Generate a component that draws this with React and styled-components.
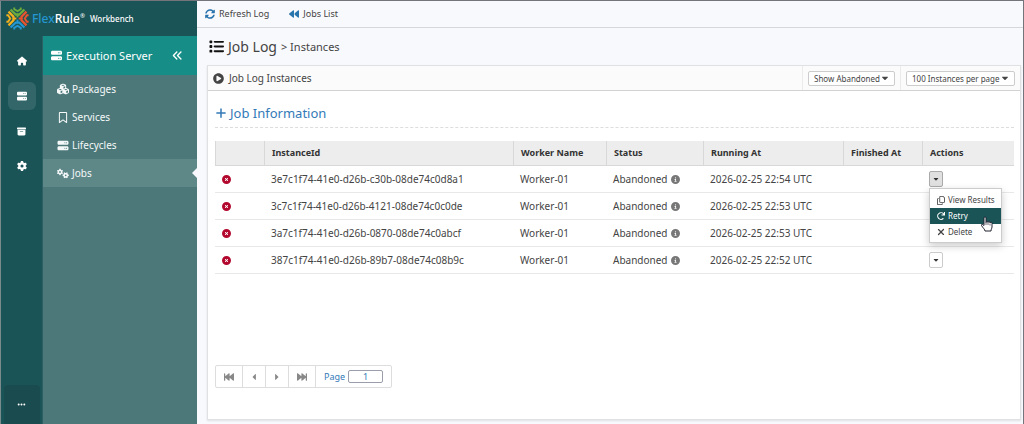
import React from 'react';
import styled, { createGlobalStyle } from 'styled-components';
import { FaCaretDown, FaCaretLeft, FaCaretRight, FaPlayCircle, FaRedo, FaSyncAlt } from 'react-icons/fa';
import {
  FaAnglesLeft,
  FaBackward,
  FaBackwardFast,
  FaBoxArchive,
  FaCircleInfo,
  FaCircleXmark,
  FaCubes,
  FaEllipsis,
  FaForwardFast,
  FaGear,
  FaGears,
  FaHouse,
  FaList,
  FaPlus,
  FaRegBookmark,
  FaRegCopy,
  FaServer,
  FaXmark,
} from 'react-icons/fa6';

const GlobalStyle = createGlobalStyle`
  *, *::before, *::after {
    box-sizing: border-box;
  }

  body {
    margin: 0;
    background: #f8f9fc;
    color: #444;
    font-family: 'Noto Sans', 'Open Sans', sans-serif;
    font-size: 10px;
    line-height: 16px;
  }

  button, input, select {
    font: inherit;
    color: inherit;
  }

  a {
    color: inherit;
    text-decoration: none;
  }

  svg {
    flex-shrink: 0;
  }
`;

const Shell = styled.div`
  display: grid;
  grid-template-columns: 197px minmax(0, 1fr);
  min-height: 100vh;
  border: 1px solid #74757c;
  border-width: 1px 1px 0 0;
`;

const Navigation = styled.div`
  display: grid;
  grid-template-columns: 42px 1fr;
  grid-template-rows: 35px 1fr;
  background: #1a5457;
  border-left: 1px solid #7b8a8c;
  color: #fff;
`;

const Brand = styled.a`
  grid-column: 1 / -1;
  display: flex;
  align-items: center;
  padding-left: 5px;

  & > svg {
    margin-right: 3px;
  }

  & strong {
    font-size: 12px;
    font-weight: 500;
  }

  & em {
    color: #2596d1;
    font-style: normal;
  }

  & sup {
    font-size: 6px;
    line-height: 6px;
  }

  & > span {
    margin-left: 5px;
    font-size: 8px;
    font-weight: 500;
  }
`;

const Rail = styled.nav`
  display: flex;
  flex-direction: column;
  align-items: center;
  gap: 7px;
  padding-top: 11px;
  border-right: 1px solid #2c6064;
`;

const RailLink = styled.a`
  display: grid;
  place-items: center;
  width: 28px;
  height: 28px;
  border-radius: 6px;
  background: ${({ $active }) => ($active ? '#326669' : 'transparent')};
`;

const RailMore = styled.button`
  width: 36px;
  height: 39px;
  margin-top: auto;
  padding: 0;
  border: 0;
  border-radius: 4px 4px 0 0;
  background: #1a4b4e;
  color: #fff;
`;

const Sidebar = styled.nav`
  background: #4c787a;
`;

const SidebarHeader = styled.div`
  display: flex;
  align-items: center;
  gap: 4px;
  height: 39px;
  padding: 0 14px 0 8px;
  background: #168d87;
  font-size: 11px;

  & button {
    display: flex;
    margin-left: auto;
    padding: 0;
    border: 0;
    background: none;
    color: #fff;
  }
`;

const SidebarLink = styled.a`
  position: relative;
  display: flex;
  align-items: center;
  gap: 3px;
  height: 28px;
  padding-left: 14px;
  background: ${({ $active }) => ($active ? '#5e8788' : 'transparent')};
  color: #f4f8f8;

  & svg {
    width: 12px;
  }

  &::after {
    content: '';
    display: ${({ $active }) => ($active ? 'block' : 'none')};
    position: absolute;
    right: 0;
    border: 5px solid transparent;
    border-left-width: 0;
    border-right-color: #f8f9fc;
  }
`;

const Main = styled.main`
  display: flex;
  flex-direction: column;
  padding-bottom: 4px;
`;

const Toolbar = styled.div`
  display: flex;
  align-items: center;
  gap: 20px;
  height: 27px;
  padding-left: 8px;
  border-bottom: 1px solid #d5d7da;
`;

const ToolButton = styled.button`
  display: flex;
  align-items: center;
  gap: 4px;
  padding: 0;
  border: 0;
  background: none;
  font-size: 9px;

  & svg {
    color: #2a74ad;
  }
`;

const Title = styled.h1`
  display: flex;
  align-items: center;
  gap: 4px;
  height: 37px;
  margin: 0;
  padding-left: 12px;
  font-size: 14px;
  font-weight: 400;

  & svg {
    color: #111;
  }

  & small {
    font-size: 11px;
  }
`;

const Panel = styled.section`
  flex: 1;
  margin: 0 2px 0 10px;
  border: 1px solid #e0e1e3;
  background: #fff;
  box-shadow: 0 1px 2px rgba(0, 0, 0, 0.1);
`;

const PanelHeader = styled.header`
  display: flex;
  align-items: center;
  height: 25px;
  padding-left: 5px;
  border-bottom: 1px solid #d0d2d4;
  background: #fbfbfb;

  & h2 {
    display: flex;
    align-items: center;
    gap: 5px;
    margin: 0 auto 0 0;
    font-size: 10px;
    font-weight: 400;
  }
`;

const Filter = styled.div`
  display: flex;
  align-items: center;
  align-self: stretch;
  padding: 0 5px;
  border-left: 1px solid #ebebeb;
`;

const SelectBox = styled.div`
  display: grid;
  align-items: center;

  & > * {
    grid-area: 1 / 1;
  }

  & select {
    appearance: none;
    height: 15px;
    padding: 0 14px 0 5px;
    border: 1px solid #ccc;
    border-radius: 2px;
    background: #fff;
    font-size: 8px;
    line-height: 13px;
  }

  & svg {
    justify-self: end;
    margin-right: 5px;
    pointer-events: none;
  }
`;

const PanelBody = styled.div`
  padding: 8px 6px 8px 7px;
`;

const InfoToggle = styled.button`
  display: flex;
  align-items: center;
  gap: 3px;
  width: 100%;
  height: 29px;
  margin-bottom: 13px;
  padding: 0;
  border: 0;
  border-bottom: 1px dashed #ddd;
  background: none;
  color: #337ab7;
  font-size: 13px;
`;

const Table = styled.table`
  width: 100%;
  border-collapse: separate;
  border-spacing: 0;
  table-layout: fixed;

  & th, & td {
    padding: 0 7px;
    text-align: left;
    white-space: nowrap;
  }

  & th {
    height: 25px;
    border-bottom: 1px solid #d8d8d8;
    border-left: 1px solid #d8d8d8;
    background: #ededed;
    color: #333;
    font-size: 9px;
    font-weight: 700;
  }

  & td {
    height: 27px;
    border-bottom: 1px solid #e8e8e8;
  }
`;

const Status = styled.span`
  display: flex;
  align-items: center;
  gap: 3px;

  & svg {
    color: ${({ $failed }) => ($failed ? '#b3092f' : '#777')};
  }
`;

const ActionCell = styled.div`
  position: relative;
  display: flex;
`;

const ActionButton = styled.button`
  display: grid;
  place-items: center;
  width: 14px;
  height: 16px;
  padding: 0;
  border: 1px solid ${({ $open }) => ($open ? '#aaa' : '#ccc')};
  border-radius: 2px;
  background: ${({ $open }) => ($open ? '#e0e0e0' : '#fff')};
  color: #333;
`;

const Menu = styled.div`
  position: absolute;
  z-index: 1;
  top: calc(100% + 1px);
  left: 0;
  width: 73px;
  padding: 3px 0 2px;
  border: 1px solid #ccc;
  background: #fff;
  box-shadow: 0 3px 8px rgba(0, 0, 0, 0.2);
`;

const MenuItem = styled.button`
  display: flex;
  align-items: center;
  gap: 2px;
  width: 100%;
  height: 16px;
  padding: 0 6px;
  border: 0;
  background: ${({ $active }) => ($active ? '#1a5457' : 'none')};
  color: ${({ $active }) => ($active ? '#fff' : '#444')};
  font-size: 8px;
  white-space: nowrap;

  & svg {
    width: 10px;
  }
`;

const Pointer = styled.svg`
  position: absolute;
  top: 27px;
  left: 50px;
`;

const Pager = styled.div`
  display: inline-flex;
  height: 23px;
  margin-top: 91px;
  border: 1px solid #ddd;
  border-radius: 2px;
`;

const PagerButton = styled.button`
  display: grid;
  place-items: center;
  width: ${({ $wide }) => ($wide ? '27px' : '23px')};
  padding: 0;
  border: 0;
  border-right: 1px solid #ddd;
  background: none;
  color: #888;
`;

const PageField = styled.label`
  display: flex;
  align-items: center;
  gap: 3px;
  padding: 0 8px;
  color: #337ab7;
  font-size: 9px;

  & input {
    width: 35px;
    height: 13px;
    padding: 0;
    border: 1px solid #9a9daa;
    border-radius: 2px;
    background: #fff;
    text-align: center;
  }
`;

const columns = [
  { label: '', width: '49px' },
  { label: 'InstanceId' },
  { label: 'Worker Name', width: '93px' },
  { label: 'Status', width: '97px' },
  { label: 'Running At', width: '140px' },
  { label: 'Finished At', width: '79px' },
  { label: 'Actions', width: '92px' },
];

const instances = [
  { id: '3e7c1f74-41e0-d26b-c30b-08de74c0d8a1', runningAt: '2026-02-25 22:54 UTC' },
  { id: '3c7c1f74-41e0-d26b-4121-08de74c0c0de', runningAt: '2026-02-25 22:53 UTC' },
  { id: '3a7c1f74-41e0-d26b-0870-08de74c0abcf', runningAt: '2026-02-25 22:53 UTC' },
  { id: '387c1f74-41e0-d26b-89b7-08de74c08b9c', runningAt: '2026-02-25 22:52 UTC' },
];

// top, right, bottom, left
const logoArms = ['#6dab3c', '#e8542f', '#2596d1', '#f2b01e'];

const Logo = () => (
  <svg width="23" height="23" viewBox="-12 -12 24 24" fill="none" aria-hidden="true">
    {logoArms.map((color, i) => (
      <g key={color} transform={`rotate(${i * 90})`} stroke={color}>
        <path d="M-7.2 -9.4L-1.8 -4.200H1.8L7.2 -9.400" strokeWidth="2.4" />
        <path d="M0 -1.200V-5" strokeWidth="2" />
        <path d="M-3.4 -11.6V-9.800L0 -7.600L3.4 -9.800V-11.600" strokeWidth="2" />
      </g>
    ))}
  </svg>
);

const HandPointer = () => (
  <Pointer width="13" height="16" viewBox="0 0 13 16" aria-hidden="true">
    <path
      d="M4 9.500V2a1 1 0 0 1 2 0v4.500a1 1 0 0 1 2 0a1 1 0 0 1 2 .5a1 1 0 0 1 2 .8V11c0 1.500-1 2-1 4H5c0-1.500-2-3-3.500-5.500C1 8.500 2.200 8 3 8.800z"
      fill="#fff"
      stroke="#223"
      strokeLinejoin="round"
    />
    <path d="M6 6.500v2.500M8 7v2M10 7.500v2" stroke="#223" strokeWidth="0.7" fill="none" />
  </Pointer>
);

const App = () => {
  return (
    <>
      <GlobalStyle />
      <Shell>
        <Navigation>
          <Brand href="#">
            <Logo />
            <strong>
              <em>Flex</em>Rule<sup>®</sup>
            </strong>
            <span>Workbench</span>
          </Brand>
          <Rail>
            <RailLink href="#home" aria-label="Home">
              <FaHouse size={10} />
            </RailLink>
            <RailLink href="#server" aria-label="Execution Server" $active>
              <FaServer size={10} />
            </RailLink>
            <RailLink href="#archive" aria-label="Archive">
              <FaBoxArchive size={9} />
            </RailLink>
            <RailLink href="#settings" aria-label="Settings">
              <FaGear size={10} />
            </RailLink>
            <RailMore aria-label="More">
              <FaEllipsis size={9} />
            </RailMore>
          </Rail>
          <Sidebar>
            <SidebarHeader>
              <FaServer size={11} />
              <span>Execution Server</span>
              <button aria-label="Collapse">
                <FaAnglesLeft size={11} />
              </button>
            </SidebarHeader>
            <SidebarLink href="#packages">
              <FaCubes size={12} />
              Packages
            </SidebarLink>
            <SidebarLink href="#services">
              <FaRegBookmark size={11} />
              Services
            </SidebarLink>
            <SidebarLink href="#lifecycles">
              <FaServer size={11} />
              Lifecycles
            </SidebarLink>
            <SidebarLink href="#jobs" $active>
              <FaGears size={13} />
              Jobs
            </SidebarLink>
          </Sidebar>
        </Navigation>
        <Main>
          <Toolbar>
            <ToolButton>
              <FaSyncAlt size={10} />
              Refresh Log
            </ToolButton>
            <ToolButton>
              <FaBackward size={10} />
              Jobs List
            </ToolButton>
          </Toolbar>
          <Title>
            <FaList size={15} />
            Job Log <small>&gt; Instances</small>
          </Title>
          <Panel>
            <PanelHeader>
              <h2>
                <FaPlayCircle size={11} />
                Job Log Instances
              </h2>
              <Filter>
                <SelectBox>
                  <select aria-label="Status filter">
                    <option>Show Abandoned</option>
                  </select>
                  <FaCaretDown size={10} />
                </SelectBox>
              </Filter>
              <Filter>
                <SelectBox>
                  <select aria-label="Page size">
                    <option>100 Instances per page</option>
                  </select>
                  <FaCaretDown size={10} />
                </SelectBox>
              </Filter>
            </PanelHeader>
            <PanelBody>
              <InfoToggle>
                <FaPlus size={12} />
                Job Information
              </InfoToggle>
              <Table>
                <colgroup>
                  {columns.map(({ label, width }) => (
                    <col key={label} style={{ width }} />
                  ))}
                </colgroup>
                <thead>
                  <tr>
                    {columns.map(({ label }) => (
                      <th key={label}>{label}</th>
                    ))}
                  </tr>
                </thead>
                <tbody>
                  {instances.map(({ id, runningAt }, i) => (
                    <tr key={id}>
                      <td>
                        <Status $failed>
                          <FaCircleXmark size={9} />
                        </Status>
                      </td>
                      <td>{id}</td>
                      <td>Worker-01</td>
                      <td>
                        <Status>
                          Abandoned
                          <FaCircleInfo size={9} />
                        </Status>
                      </td>
                      <td>{runningAt}</td>
                      <td />
                      <td>
                        <ActionCell>
                          <ActionButton aria-label="Actions" $open={i === 0}>
                            <FaCaretDown size={8} />
                          </ActionButton>
                          {i === 0 && (
                            <Menu>
                              <MenuItem>
                                <FaRegCopy size={9} />
                                View Results
                              </MenuItem>
                              <MenuItem $active>
                                <FaRedo size={8} />
                                Retry
                              </MenuItem>
                              <MenuItem>
                                <FaXmark size={10} />
                                Delete
                              </MenuItem>
                              <HandPointer />
                            </Menu>
                          )}
                        </ActionCell>
                      </td>
                    </tr>
                  ))}
                </tbody>
              </Table>
              <Pager>
                <PagerButton $wide aria-label="First page">
                  <FaBackwardFast size={10} />
                </PagerButton>
                <PagerButton aria-label="Previous page">
                  <FaCaretLeft size={10} />
                </PagerButton>
                <PagerButton aria-label="Next page">
                  <FaCaretRight size={10} />
                </PagerButton>
                <PagerButton $wide aria-label="Last page">
                  <FaForwardFast size={10} />
                </PagerButton>
                <PageField>
                  Page
                  <input defaultValue="1" />
                </PageField>
              </Pager>
            </PanelBody>
          </Panel>
        </Main>
      </Shell>
    </>
  );
};

export default App;
